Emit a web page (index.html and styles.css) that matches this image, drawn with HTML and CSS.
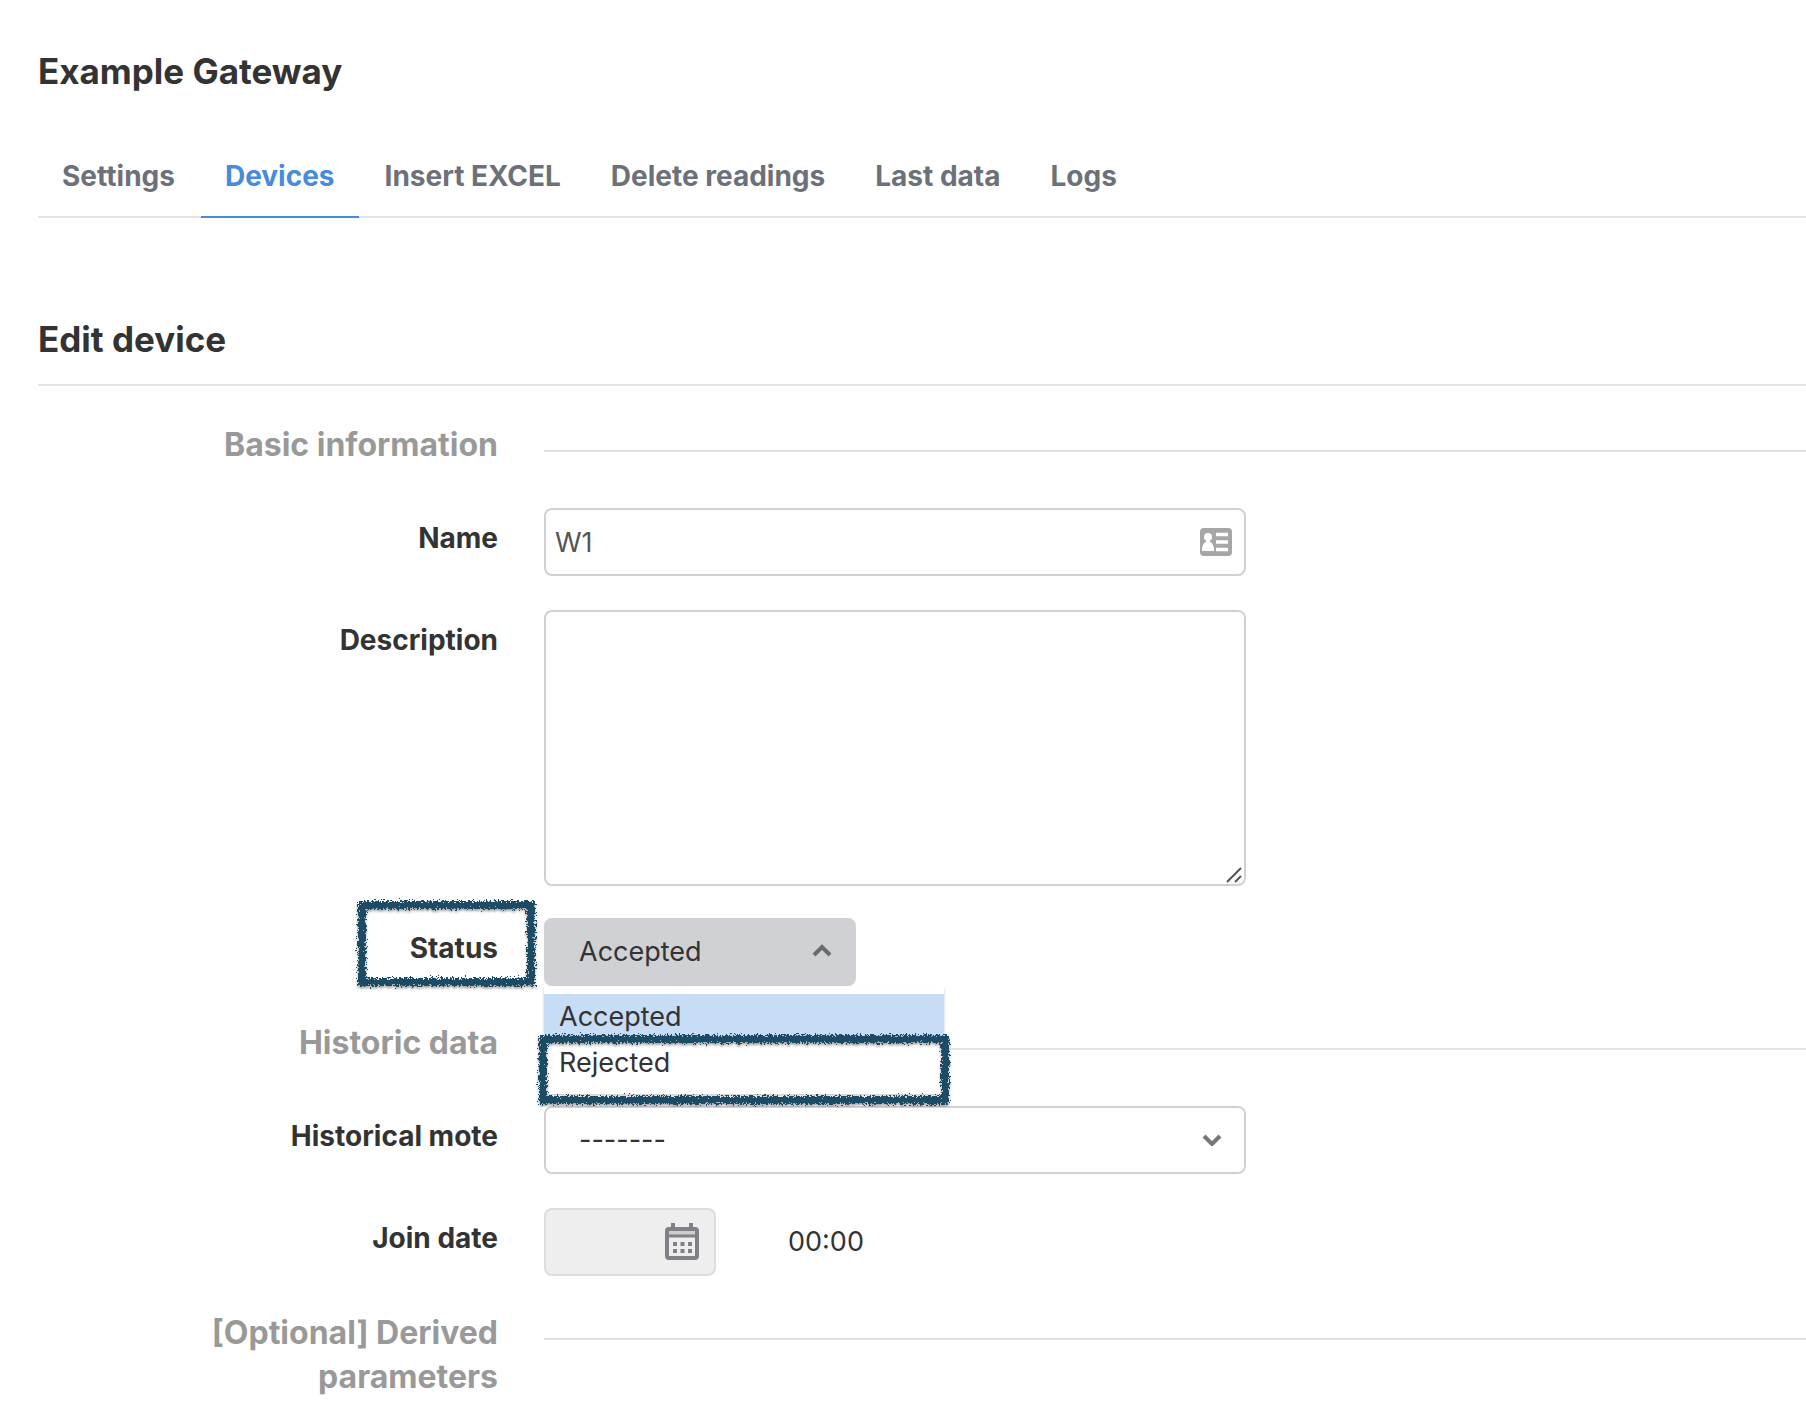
FILE: index.html
```html
<!DOCTYPE html>
<html lang="en">
<head>
<meta charset="utf-8">
<meta name="viewport" content="width=device-width, initial-scale=1">
<title>Example Gateway</title>
<link rel="stylesheet" href="styles.css">
</head>
<body>
<svg class="defs" width="0" height="0" aria-hidden="true">
  <filter id="chalk" x="-5%" y="-10%" width="110%" height="120%">
    <feTurbulence type="fractalNoise" baseFrequency="0.55" numOctaves="3" seed="4" result="noise"/>
    <feDisplacementMap in="SourceGraphic" in2="noise" scale="9" xChannelSelector="R" yChannelSelector="G" result="rough"/>
    <feDropShadow in="rough" dx="0" dy="2" stdDeviation="1" flood-color="#000000" flood-opacity="0.35"/>
  </filter>
</svg>
<main class="page">
  <h1 class="title">Example Gateway</h1>
  <nav class="tabs" aria-label="Gateway">
    <a class="tab" href="#settings">Settings</a>
    <a class="tab tab-active" href="#devices" aria-current="page">Devices</a>
    <a class="tab" href="#insert">Insert EXCEL</a>
    <a class="tab" href="#delete">Delete readings</a>
    <a class="tab" href="#last">Last data</a>
    <a class="tab" href="#logs">Logs</a>
  </nav>
  <h2 class="title subtitle">Edit device</h2>
  <form class="form">
    <div class="section">
      <h3 class="section-name">Basic information</h3>
      <div class="rule"></div>
    </div>
    <div class="field">
      <label class="label" for="name">Name</label>
      <div class="control">
        <input class="box" id="name" type="text" value="W1">
        <svg class="icon-card" width="32" height="28" viewBox="0 0 32 28" aria-hidden="true">
          <rect width="32" height="28" rx="4" fill="#a6a6a6"/>
          <circle cx="8" cy="9" r="4" fill="#fff"/>
          <path d="M2 23V20Q3 15 6 14V12H10V14Q13 15 14 20V23Z" fill="#fff"/>
          <path d="M16 6.500H28M16 14H28M16 21.500H28" stroke="#fff" stroke-width="3.500"/>
        </svg>
      </div>
    </div>
    <div class="field field-tall">
      <label class="label" for="description">Description</label>
      <div class="control">
        <textarea class="box area" id="description"></textarea>
        <svg class="icon-grip" width="16" height="16" viewBox="0 0 16 16" aria-hidden="true">
          <path d="M1 15L15 1M9 15L15 9" stroke="#555" stroke-width="2"/>
        </svg>
      </div>
    </div>
    <div class="field">
      <div class="label">
        <label for="status">Status</label>
        <svg class="mark mark-label" aria-hidden="true"><rect class="mark-line" x="8" y="8" width="169" height="77"/></svg>
      </div>
      <div class="control control-status">
        <select class="box pick pick-open" id="status">
          <option>Accepted</option>
          <option>Rejected</option>
        </select>
        <svg class="icon-chevron" width="20" height="14" viewBox="0 0 20 14" aria-hidden="true">
          <path d="M2 11L10 3L18 11" fill="none" stroke="#6b6b6d" stroke-width="4"/>
        </svg>
        <ul class="menu" role="listbox" aria-label="Status">
          <li class="option option-on" role="option" aria-selected="true">Accepted</li>
          <li class="option" role="option" aria-selected="false">Rejected</li>
        </ul>
        <svg class="mark mark-option" aria-hidden="true"><rect class="mark-line" x="8" y="8" width="402" height="61"/></svg>
      </div>
    </div>
    <div class="section">
      <h3 class="section-name">Historic data</h3>
      <div class="rule"></div>
    </div>
    <div class="field">
      <label class="label" for="mote">Historical mote</label>
      <div class="control">
        <select class="box pick" id="mote">
          <option>-------</option>
        </select>
        <svg class="icon-chevron" width="20" height="14" viewBox="0 0 20 14" aria-hidden="true">
          <path d="M2 4L10 12L18 4" fill="none" stroke="#777" stroke-width="4"/>
        </svg>
      </div>
    </div>
    <div class="field">
      <label class="label" for="date">Join date</label>
      <div class="date-row">
        <div class="control control-date">
          <input class="box box-off" id="date" type="text" disabled>
          <svg class="icon-date" width="34" height="38" viewBox="0 0 34 38" aria-hidden="true">
            <path d="M8 0V6M26 0V6" stroke="#808086" stroke-width="4"/>
            <rect x="2" y="6" width="30" height="29" rx="2" fill="#eee" stroke="#808086" stroke-width="4"/>
            <path d="M4 10H30" stroke="#cfcdd0" stroke-width="4"/>
            <path d="M4 13H30" stroke="#808086" stroke-width="3"/>
            <path d="M8 21H27M8 28H27" stroke="#808086" stroke-width="4" stroke-dasharray="4 3.500"/>
          </svg>
        </div>
        <span class="time">00:00</span>
      </div>
    </div>
    <div class="section">
      <h3 class="section-name">[Optional] Derived parameters</h3>
      <div class="rule"></div>
    </div>
  </form>
</main>
</body>
</html>
```
FILE: styles.css
```css
* {
  box-sizing: border-box;
}

body {
  margin: 0;
  background: #fff;
  color: #333;
  font-family: Inter, "Liberation Sans", sans-serif;
  font-size: 27px;
  line-height: 40px;
}

.defs {
  position: absolute;
}

.page {
  padding: 47px 0 24px 38px;
}

.title {
  margin: 0;
  font-size: 35px;
  font-weight: 700;
  line-height: 48px;
}

.tabs {
  display: flex;
  gap: 2px;
  margin-top: 63px;
  border-bottom: 2px solid #e4e4e4;
}

.tab {
  margin-bottom: -2px;
  padding: 0 24px 22px;
  border-bottom: 2px solid transparent;
  color: #6c7179;
  font-size: 28px;
  font-weight: 700;
  line-height: 36px;
  text-decoration: none;
}

.tab-active {
  border-color: #478be0;
  color: #478be0;
}

.subtitle {
  margin-top: 97px;
  padding-bottom: 21px;
  border-bottom: 2px solid #e4e4e4;
}

.form {
  margin-top: 36px;
}

.section,
.field {
  display: grid;
  grid-template-columns: 460px minmax(0, 1fr);
  column-gap: 46px;
}

.section {
  padding: 1px 0 41px;
}

.section-name {
  margin: 0;
  padding-left: 100px;
  color: #999;
  font-size: 32px;
  font-weight: 650;
  line-height: 44px;
  text-align: right;
}

.rule {
  height: 2px;
  margin-top: 27px;
  background: #e4e4e4;
}

.field {
  margin-bottom: 34px;
}

.field-tall {
  margin-bottom: 32px;
}

.label {
  position: relative;
  padding-top: 10px;
  font-size: 28px;
  font-weight: 700;
  text-align: right;
}

.control {
  position: relative;
  max-width: 702px;
}

.control-status {
  width: 312px;
}

.control-date {
  width: 172px;
}

.box {
  display: block;
  width: 100%;
  height: 68px;
  padding: 0 9px;
  border: 2px solid #d0d0d6;
  border-radius: 8px;
  background: #fff;
  color: #555;
  font: inherit;
}

.area {
  height: 276px;
  resize: none;
}

.pick {
  padding: 0 33px;
  appearance: none;
  color: #333;
}

.pick-open {
  border-color: #d0d1d5;
  background: #d0d1d5;
}

.box-off {
  border-color: #ddd;
  background: #eee;
}

.icon-card {
  position: absolute;
  top: 20px;
  right: 14px;
}

.icon-grip {
  position: absolute;
  right: 4px;
  bottom: 3px;
}

.icon-chevron {
  position: absolute;
  top: 26px;
  right: 24px;
}

.icon-date {
  position: absolute;
  top: 15px;
  right: 17px;
}

.menu {
  position: absolute;
  z-index: 1;
  top: 68px;
  left: 0;
  width: 400px;
  margin: 0;
  padding: 8px 0;
  background: #fff;
  box-shadow: 0 2px 3px rgba(0, 0, 0, 0.2);
  list-style: none;
}

.option {
  padding: 0 15px;
  line-height: 46px;
}

.option-on {
  background: #c7dcf5;
}

.mark {
  position: absolute;
  z-index: 2;
  overflow: visible;
  pointer-events: none;
}

.mark-label {
  top: -21px;
  right: -42px;
  width: 186px;
  height: 94px;
}

.mark-option {
  top: 113px;
  left: -9px;
  width: 420px;
  height: 78px;
}

.mark-line {
  fill: none;
  stroke: #1b4c66;
  stroke-width: 8px;
  filter: url(#chalk);
}

.date-row {
  display: flex;
  align-items: center;
  gap: 72px;
}
```
